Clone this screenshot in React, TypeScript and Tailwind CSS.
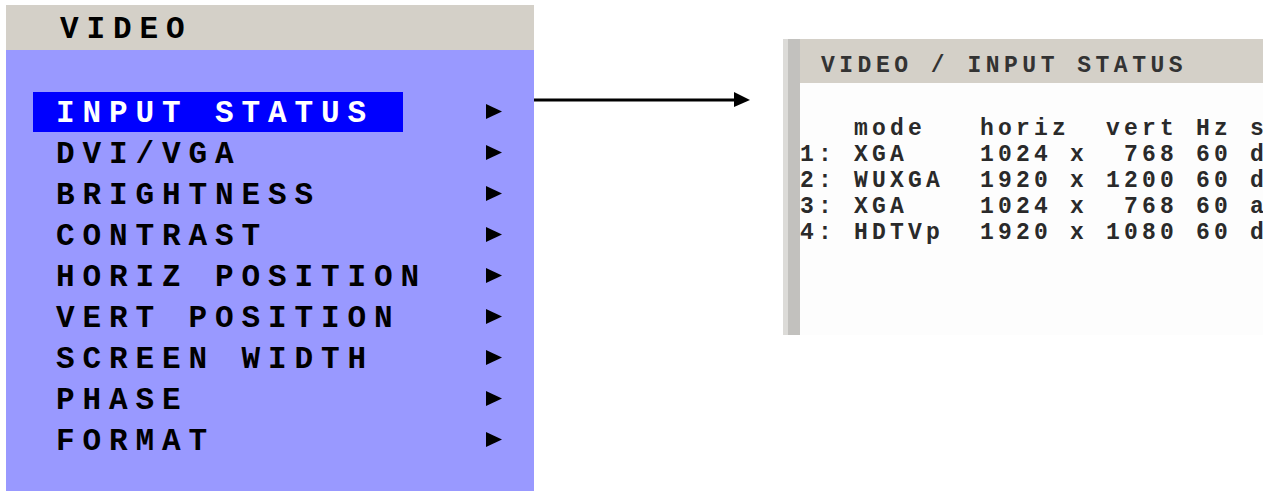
import React from "react";

const MENU_ITEMS = [
  "INPUT STATUS",
  "DVI/VGA",
  "BRIGHTNESS",
  "CONTRAST",
  "HORIZ POSITION",
  "VERT POSITION",
  "SCREEN WIDTH",
  "PHASE",
  "FORMAT",
];

const STATUS_LINES = [
  "   mode   horiz  vert Hz s",
  "1: XGA    1024 x  768 60 d",
  "2: WUXGA  1920 x 1200 60 d",
  "3: XGA    1024 x  768 60 a",
  "4: HDTVp  1920 x 1080 60 d",
];

function Triangle() {
  return (
    <svg width="16" height="15" viewBox="0 0 16 15" className="shrink-0">
      <polygon points="0,0 16,7.5 0,15" fill="#000" />
    </svg>
  );
}

export default function App() {
  return (
    <div className="w-[1263px] h-[491px] overflow-hidden bg-white flex font-['Liberation_Mono',monospace] font-bold">
      {/* OSD menu */}
      <div className="ml-[6px] mt-[5px] w-[528px] flex flex-col shrink-0">
        <div className="h-[45px] bg-[#d4d0c8] flex items-center pl-[54px] pt-[4px] text-[31px] leading-none tracking-[7.9px] text-black">
          VIDEO
        </div>
        <div className="flex-1 bg-[#9999ff] pt-[41px] pl-[27px]">
          {MENU_ITEMS.map((label, i) => (
            <div key={label} className="h-[41px] flex items-center">
              <div
                className={`w-[370px] h-[40px] flex items-center pl-[23px] pt-[4px] text-[31px] leading-none tracking-[7.9px] whitespace-pre ${
                  i === 0 ? "bg-[#0000ff] text-white" : "text-black"
                }`}
              >
                {label}
              </div>
              <div className="ml-[83px]">
                <Triangle />
              </div>
            </div>
          ))}
        </div>
      </div>

      {/* pointer arrow */}
      <svg width="216" height="16" viewBox="0 0 216 16" className="shrink-0 mt-[92px]">
        <rect x="0" y="6.5" width="202" height="3" fill="#000" />
        <polygon points="200,0 216,8 200,15" fill="#000" />
      </svg>

      {/* captured status window */}
      <div className="ml-[33px] mt-[39px] h-[296px] flex shrink-0 w-[520px]">
        <div className="w-[5px] bg-[#dcdbd8]" />
        <div className="w-[12px] bg-[#c2c1be]" />
        <div className="flex-1 flex flex-col">
          <div className="h-[44px] bg-[#d4d0c8] pl-[21px] pt-[14px] text-[23px] leading-[26px] tracking-[4.5px] whitespace-pre text-[#333]">
            VIDEO / INPUT STATUS
          </div>
          <div className="flex-1 bg-[#fdfdfd] pt-[33px] text-[23px] leading-[26px] tracking-[4.2px] whitespace-pre text-[#2a2a2a]">
            {STATUS_LINES.map((line) => (
              <div key={line}>{line}</div>
            ))}
          </div>
        </div>
      </div>
    </div>
  );
}
